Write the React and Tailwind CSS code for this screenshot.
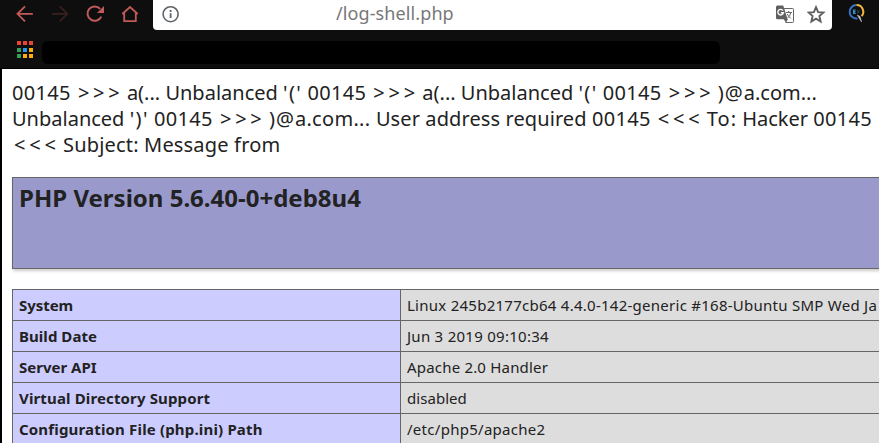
const rows = [
  ["System", "tracking-[-0.05px]", "Linux 245b2177cb64 4.4.0-142-generic #168-Ubuntu SMP Wed Ja", "tracking-[0.26px]"],
  ["Build Date", "tracking-[0.05px]", "Jun 3 2019 09:10:34", "tracking-[0.27px]"],
  ["Server API", "tracking-[0px]", "Apache 2.0 Handler", "tracking-[0.19px]"],
  ["Virtual Directory Support", "tracking-[0.14px]", "disabled", "tracking-[0.05px]"],
  ["Configuration File (php.ini) Path", "tracking-[0.17px]", "/etc/php5/apache2", "tracking-[0.28px]"],
];

const dots = [
  "bg-[#ea4335]", "bg-[#ea4335]", "bg-[#ea4335]",
  "bg-[#34a056]", "bg-[#2196f3]", "bg-[#fbab0c]",
  "bg-[#34a056]", "bg-[#fbab0c]", "bg-[#fbab0c]",
];

const Code = () => <span className="tracking-[0.3px]">00145</span>;
const Arrows = ({ children }) => <span className="ml-[2px] mr-[-1.8px] tracking-[3.75px]">{children}</span>;
const Quoted = ({ children }) => <span className="tracking-[1.4px]">{children}</span>;
const At = () => <span className="tracking-[1px]">)@</span>;

function Nav() {
  return (
    <svg className="ml-[11px] mt-[4px] shrink-0" width="130" height="20" fill="none" stroke="#c25a5a" strokeWidth="1.8">
      <path d="M21.8 9.8H7M14 2.3L6.5 9.8L14 17.3" />
      <path d="M41 9.8H56M48.8 2.3L56.3 9.8L48.8 17.3" stroke="#3b1f1f" />
      <path d="M90.3 12.6A7.2 7.2 0 1 1 89.1 4.8" strokeWidth="2" />
      <path d="M93 2V9H86Z" fill="#c25a5a" stroke="none" />
      <path d="M111.3 10L119 3L126.7 10M113.2 8.9V17.1H124.8V8.9" />
    </svg>
  );
}

export default function App() {
  return (
    <div className="flex h-[443px] w-[879px] flex-col overflow-hidden bg-[#0e0e0e] font-['Noto_Sans','Open_Sans',sans-serif] text-[#222222]">
      <header className="flex h-[69px] shrink-0 flex-col border-b border-black">
        <div className="flex h-[30px]">
          <Nav />
          <div className="ml-[12px] flex h-[30px] w-[679px] items-start rounded-b-sm bg-white">
            <svg className="ml-[9px] mt-[5px] shrink-0" width="18" height="18" fill="none" stroke="#5f6368">
              <circle cx="8.6" cy="9.2" r="7.5" strokeWidth="1.6" />
              <path d="M8.6 8.2V13M8.6 5V6.9" strokeWidth="1.8" />
            </svg>
            <span className="ml-[156px] w-[130px] whitespace-nowrap text-[18px] leading-[27px] tracking-[0.1px] text-[#777777]">/log-shell.php</span>
            <svg className="ml-[310px] mt-[5px] shrink-0" width="19" height="19">
              <path d="M8 3.5H16.7Q17.5 3.5 17.5 4.3V16.7Q17.5 17.5 16.7 17.5H9.5" fill="white" stroke="#666" />
              <path d="M1.5 0.5H7.2L11.6 14.3H1.5Q0 14.3 0 12.8V2Q0 0.5 1.5 0.5Z" fill="#5f5f5f" />
              <path d="M7 5.6A2.8 2.8 0 1 0 7.4 7.7H4.8" fill="none" stroke="white" strokeWidth="1.4" />
              <path d="M7.6 14L10 17.8L12 14Z" fill="#5f5f5f" />
              <path d="M10 7.5H16M12.7 6V7.5M14.8 7.7Q14 11 11.6 13M11.2 9Q12.8 11.5 14.8 13.5" fill="none" stroke="#666" />
            </svg>
            <svg className="ml-[12px] mt-[5px] shrink-0" width="20" height="19" fill="none" stroke="#5f5f5f" strokeWidth="1.9">
              <path d="M9 2.2L11.1 7.1L16.4 7.5L12.4 11L13.6 16.5L9 13.6L4.4 16.5L5.6 11L1.6 7.5L6.9 7.1Z" />
            </svg>
          </div>
          <svg className="ml-[15px] mt-[3px] shrink-0" width="20" height="20" fill="none">
            <path d="M9.5 2.1A6.7 6.7 0 1 0 10.5 15.4" stroke="#3972c4" strokeWidth="2" />
            <path d="M9.5 2.1A6.7 6.7 0 0 1 14.6 13.2" stroke="#f3b63c" strokeWidth="2" />
            <path d="M8.7 7H6.6V10.4H8.7M6.6 8.7H8.5" stroke="#349bc4" strokeWidth="1.2" />
            <path d="M10 7L12.5 10.4M12.5 7L10 10.4" stroke="#2b4555" strokeWidth="1" />
            <path d="M10.2 12L14.6 19L13 13.4Z" fill="#cccccc" stroke="#cccccc" strokeWidth="0.5" />
          </svg>
        </div>
        <div className="flex h-[38px] items-start pt-[11px]">
          <div className="ml-[17px] grid w-[16px] grid-cols-[4px_4px_4px] gap-x-[2px] gap-y-[2.5px]">
            {dots.map((color, i) => <i key={i} className={`h-[4px] w-[4px] ${color}`} />)}
          </div>
          <div className="ml-[9px] h-[23px] w-[678px] rounded-[6px] bg-black" />
        </div>
      </header>
      <main className="min-h-0 flex-1 overflow-hidden border-l-2 border-black bg-white pl-[10px] pt-[11px]">
        <div className="h-[97px] whitespace-nowrap text-[20px] leading-[26px]">
          <div>
            <Code /> <Arrows>&gt;&gt;&gt;</Arrows> a(... Unbalanced <Quoted>'('</Quoted> <Code /> <Arrows>&gt;&gt;&gt;</Arrows> a(... Unbalanced <Quoted>'('</Quoted> <Code /> <Arrows>&gt;&gt;&gt;</Arrows> <At />a.com...
          </div>
          <div>
            Unbalanced <Quoted>')'</Quoted> <Code /> <Arrows>&gt;&gt;&gt;</Arrows> <At /><span className="tracking-[0.3px]">a.com... </span><span className="tracking-[0.1px]">User address required </span><Code /> <Arrows>&lt;&lt;&lt;</Arrows> <span className="tracking-[1px]">To:</span> Hacker <Code />
          </div>
          <div>
            <Arrows>&lt;&lt;&lt;</Arrows> <span className="tracking-[0.18px]">Subject: Message from</span>
          </div>
        </div>
        <section className="h-[92px] w-[1168px] border border-[#666666] bg-[#9999cc] pl-[6px] pt-[4px] shadow-[1px_2px_3px_#cccccc]">
          <h1 className="whitespace-nowrap text-[24px] font-bold leading-[32px]">PHP Version 5.6.40-0+deb8u4</h1>
        </section>
        <section className="mt-[20px] w-[1168px] border-l border-t border-[#666666] text-[15px] leading-[30px]">
          {rows.map(([label, labelTracking, value, valueTracking]) => (
            <div key={label} className="flex h-[31px] whitespace-nowrap border-b border-[#666666]">
              <div className={`w-[388px] shrink-0 border-r border-[#666666] bg-[#ccccff] pl-[6px] font-bold ${labelTracking}`}>{label}</div>
              <div className={`flex-1 bg-[#dddddd] pl-[6px] ${valueTracking}`}>{value}</div>
            </div>
          ))}
        </section>
      </main>
    </div>
  );
}
